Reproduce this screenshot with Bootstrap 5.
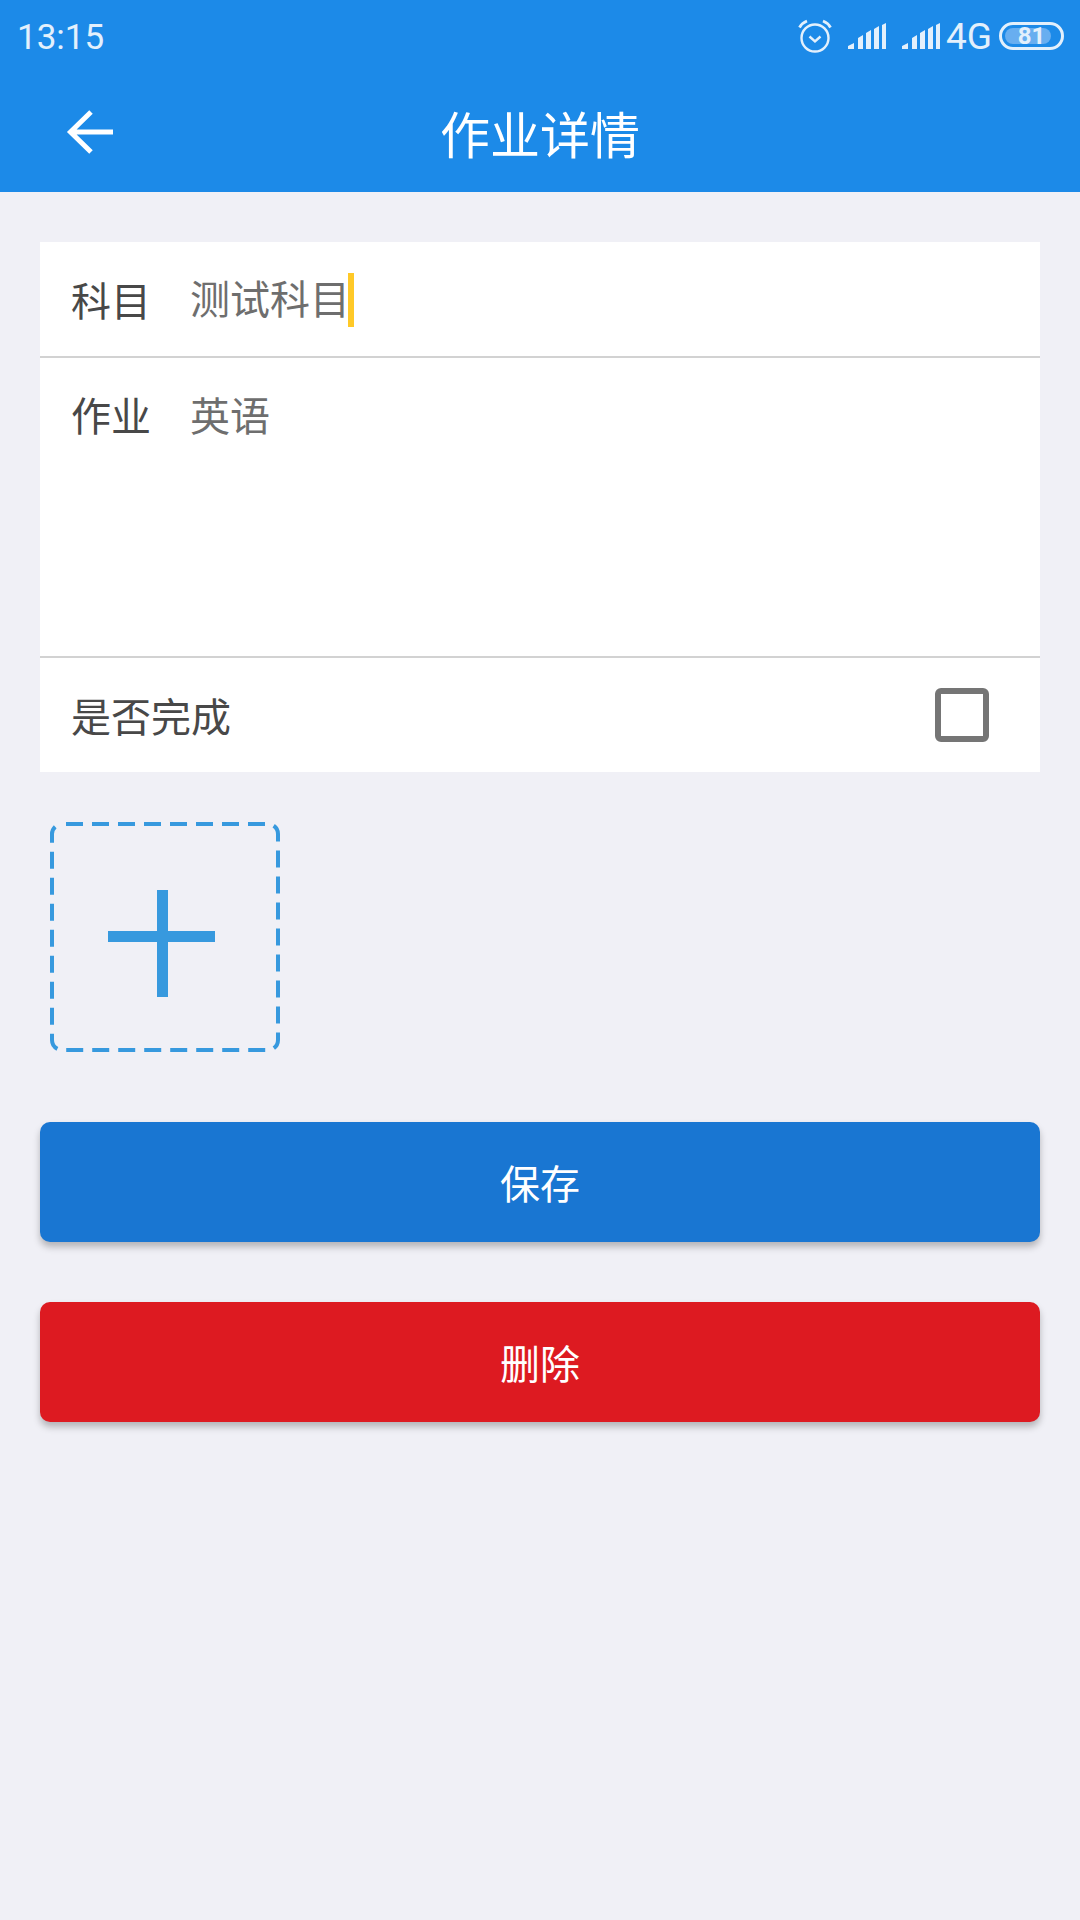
<!DOCTYPE html>
<html lang="zh-CN">
<head>
    <meta charset="UTF-8">
    <meta name="viewport" content="width=device-width, initial-scale=1.0">
    <link href="https://cdn.jsdelivr.net/npm/bootstrap@5.3.3/dist/css/bootstrap.min.css" rel="stylesheet">
    <script src="https://cdn.jsdelivr.net/npm/bootstrap@5.3.3/dist/js/bootstrap.bundle.min.js"></script>
    <title>作业详情</title>
    <style>
        body{
            min-height: 1920px;
            background: #f0f0f6;
            font-family: "Noto Sans CJK SC", Roboto, sans-serif;
            font-weight: 400;
        }
        .top-area{height: 192px; background: #1c8ae8; color: #fff;}
        .status-row{height: 72px; padding: 0 16px 0 17px;}
        .status-time{font: 400 35px Roboto, sans-serif; color: #e3f0fc; position: relative; top: 1px;}
        .status-4g{font: 400 37px Roboto, sans-serif; color: #e3f0fc; margin: 0 7px 0 6px;}
        .batt{width: 65px; height: 28px; border: 3px solid #e3f0fc; border-radius: 14px; position: relative; padding: 3px;}
        .batt-fill{height: 100%; width: 86%; background: #68aef0; border-radius: 8px;}
        .batt-num{position: absolute; inset: 0; text-align: center; font: 700 24px/22px Roboto, sans-serif; color: #e3f0fc;}
        .title-row{height: 120px; position: relative;}
        .back-btn{position: absolute; left: 66px; top: 37px; line-height: 0;}
        .page-title{font-size: 50px; line-height: 1; margin: 0; font-weight: 400;}
        .form-box{margin: 50px 40px 0; background: #fff;}
        .line{padding-left: 31px; padding-right: 51px; font-size: 40px; color: #484848; border-bottom: 2px solid #d2d2d2;}
        .line:last-child{border-bottom: 0;}
        .line-name{width: 119px; flex-shrink: 0;}
        .line-val{color: #6e6e6e;}
        .line-one{height: 116px;}
        .line-two{height: 300px; padding-top: 30px;}
        .line-three{height: 114px;}
        .line-two .line-name, .line-two .line-val{line-height: 52px;}
        .caret-bar{display: inline-block; width: 6px; height: 54px; background: #ffc928; vertical-align: middle; margin-left: -2px; position: relative; top: -4px;}
        .tick-box{width: 54px; height: 54px; border: 6px solid #757575; border-radius: 6px;}
        .add-box{width: 230px; height: 230px; margin: 50px 0 0 50px; position: relative;}
        .add-frame{display: block;}
        .add-plus{position: absolute; left: 58px; top: 68px; line-height: 0;}
        .act-btn{display: block; width: 1000px; height: 120px; margin: 0 40px; border: 0; border-radius: 10px; color: #fff; font-size: 40px; font-weight: 400; box-shadow: 0 5px 7px rgba(0,0,0,.25);}
        .act-save{background: #1976d2; margin-top: 70px;}
        .act-del{background: #dd1a21; margin-top: 60px;}
    </style>
</head>
<body>
    <!-- header -->
    <div class="top-area">
        <div class="status-row d-flex align-items-center justify-content-between">
            <span class="status-time">13:15</span>
            <div class="d-flex align-items-center">
                <svg width="34" height="34" viewBox="0 0 34 34" fill="none" stroke="#e3f0fc" stroke-width="2.4" class="me-3">
                    <circle cx="17" cy="19" r="13.5"/>
                    <path d="M11.500 17.500l5.500 5 5.500-5"/>
                    <path d="M1.500 8.500Q4 4 9 2M32.500 8.500Q30 4 25 2" stroke-width="2.800"/>
                </svg>
                <svg width="38" height="28" viewBox="0 0 38 28" fill="#e3f0fc" class="me-3">
                    <path d="M0 27v-3l6-3v6zM10 27V16l5-3v14zM18 27V11l5-3v19zM26 27V7l5-3v23zM34 27V3l4-2v26z"/>
                </svg>
                <svg width="38" height="28" viewBox="0 0 38 28" fill="#e3f0fc">
                    <path d="M0 27v-3l6-3v6zM10 27V16l5-3v14zM18 27V11l5-3v19zM26 27V7l5-3v23zM34 27V3l4-2v26z"/>
                </svg>
                <span class="status-4g">4G</span>
                <div class="batt">
                    <div class="batt-fill"></div>
                    <div class="batt-num">81</div>
                </div>
            </div>
        </div>
        <div class="title-row d-flex align-items-center justify-content-center">
            <a class="back-btn">
                <svg width="48" height="46" viewBox="0 0 48 46" fill="none" stroke="#fff" stroke-width="5">
                    <path d="M47 23H5M25 3L4.500 23 25 43"/>
                </svg>
            </a>
            <h1 class="page-title">作业详情</h1>
        </div>
    </div>

    <!-- form -->
    <div class="form-box">
        <div class="line line-one d-flex align-items-center">
            <span class="line-name">科目</span>
            <span class="line-val">测试科目<span class="caret-bar"></span></span>
        </div>
        <div class="line line-two d-flex align-items-start">
            <span class="line-name">作业</span>
            <span class="line-val">英语</span>
        </div>
        <div class="line line-three d-flex align-items-center justify-content-between">
            <span>是否完成</span>
            <div class="tick-box"></div>
        </div>
    </div>

    <div class="add-box">
        <svg class="add-frame" width="230" height="230" viewBox="0 0 230 230" fill="none">
            <rect x="2" y="2" width="226" height="226" rx="10" stroke="#3799de" stroke-width="4" stroke-dasharray="17 9" stroke-dashoffset="-4"/>
        </svg>
        <div class="add-plus">
            <svg width="107" height="107" viewBox="0 0 107 107" fill="#3799de">
                <rect x="0" y="41" width="107" height="11"/>
                <rect x="49" y="0" width="11" height="107"/>
            </svg>
        </div>
    </div>

    <button class="act-btn act-save" type="button">保存</button>
    <button class="act-btn act-del" type="button">删除</button>
</body>
</html>
